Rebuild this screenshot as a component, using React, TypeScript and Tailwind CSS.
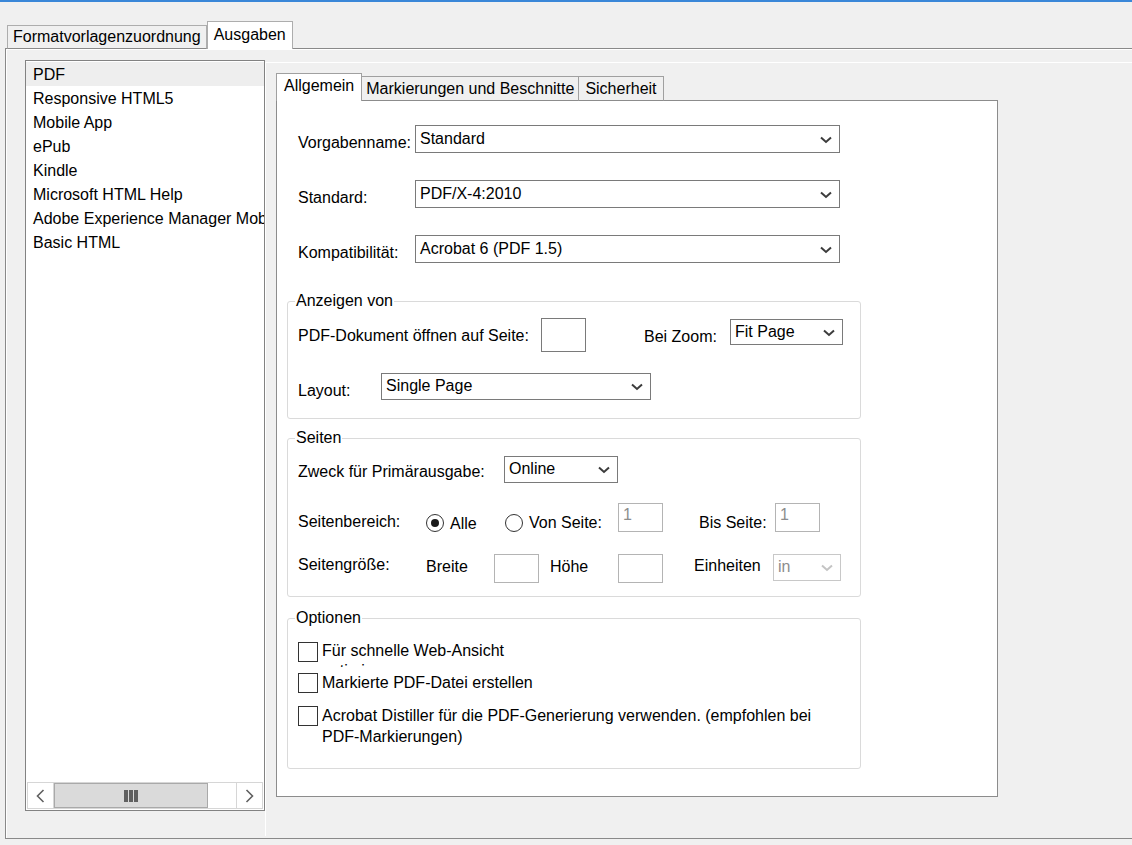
import React from "react";

type SelectProps = {
	width: number;
	height: number;
	value: string;
	disabled?: boolean;
	className?: string;
};

const Chevron = ({ disabled }: { disabled?: boolean }) => (
	<svg
		width="12"
		height="8"
		viewBox="0 0 12 8"
		className="shrink-0">
		<polyline
			points="1,1.5 6,6 11,1.5"
			fill="none"
			stroke={disabled ? "#c4c4c4" : "#3c3c3c"}
			strokeWidth="2"
		/>
	</svg>
);

const Select: React.FC<SelectProps> = ({ width, height, value, disabled, className }) => (
	<div
		className={`flex items-center justify-between bg-white border pl-[4px] pr-[7px] pb-[1px] ${
			disabled ? "border-[#c8c8c8] text-[#8d8d8d]" : "border-[#7a7a7a]"
		} ${className ?? ""}`}
		style={{ width, height }}>
		<span>{value}</span>
		<span className="pt-[2px]">
			<Chevron disabled={disabled} />
		</span>
	</div>
);

const TextBox = ({ value, dark, h = 29 }: { value?: string; dark?: boolean; h?: number }) => (
	<div
		className={`w-[45px] bg-white border pl-[4px] pt-[2px] text-[#8d8d8d] ${
			dark ? "border-[#7a7a7a]" : "border-[#b4b4b4]"
		}`}
		style={{ height: h }}>
		{value}
	</div>
);

const Radio = ({ checked }: { checked?: boolean }) => (
	<div className="w-[18px] h-[18px] rounded-full border border-[#333] bg-white flex items-center justify-center">
		{checked && <div className="w-[8px] h-[8px] rounded-full bg-[#1a1a1a]" />}
	</div>
);

const Checkbox = () => <div className="w-[20px] h-[20px] shrink-0 border border-[#333] bg-white" />;

const Group: React.FC<{ title: string; className?: string; children: React.ReactNode }> = ({
	title,
	className,
	children,
}) => (
	<fieldset className={`ml-[10px] w-[574px] border border-[#dadada] rounded-[3px] px-[7px] ${className ?? ""}`}>
		<legend className="px-[1px] leading-[18px]">{title}</legend>
		<div className="pl-[3px]">{children}</div>
	</fieldset>
);

const outputs = [
	"PDF",
	"Responsive HTML5",
	"Mobile App",
	"ePub",
	"Kindle",
	"Microsoft HTML Help",
	"Adobe Experience Manager Mobile",
	"Basic HTML",
];

export default function App() {
	return (
		<div className="w-[1132px] h-[845px] overflow-hidden bg-[#f0f0f0] text-[16px] leading-[18px] text-black font-['Liberation_Sans',Arial,sans-serif]">
			<div className="h-[2px] bg-[#3a87d8]" />

			{/* outer tabs */}
			<div className="relative z-10 h-[47px] -mb-px flex items-end pl-[7px]">
				<div className="h-[24px] px-[5px] flex items-center border border-[#adadad] border-b-[#898989] bg-[#f0f0f0]">
					Formatvorlagenzuordnung
				</div>
				<div className="h-[28px] px-[6px] pb-px flex items-center border border-b-0 border-[#adadad] bg-white">
					Ausgaben
				</div>
			</div>

			<div className="ml-[5px] h-[791px] border border-r-0 border-[#898989] flex shadow-[inset_1px_1px_0_#ffffff]">
				{/* output list */}
				<div className="w-[259px] shrink-0">
					<div className="ml-[19px] mt-[11px] w-[240px] h-[751px] border border-[#828282] bg-white flex flex-col overflow-hidden">
						<div className="flex-1 overflow-hidden pt-px">
							{outputs.map((name, i) => (
								<div
									key={name}
									className={`h-[24px] pl-[7px] pt-[2px] flex items-center whitespace-nowrap ${
										i === 0 ? "bg-[#eeeeee]" : ""
									}`}>
									{name}
								</div>
							))}
						</div>
						<div className="mx-px mb-px h-[27px] flex border border-[#d6d6d6]">
							<div className="w-[26px] flex items-center justify-center border-r border-[#d6d6d6]">
								<svg width="9" height="14" viewBox="0 0 9 14">
									<polyline points="7.5,1 1.5,7 7.5,13" fill="none" stroke="#606060" strokeWidth="1.6" />
								</svg>
							</div>
							<div className="w-[154px] bg-[#dadada] border border-[#a9a9a9] flex items-center justify-center gap-[1px]">
								<div className="w-[4px] h-[12px] bg-[#606060]" />
								<div className="w-[4px] h-[12px] bg-[#606060]" />
								<div className="w-[4px] h-[12px] bg-[#606060]" />
							</div>
							<div className="flex-1" />
							<div className="w-[26px] flex items-center justify-center border-l border-[#d6d6d6]">
								<svg width="9" height="14" viewBox="0 0 9 14">
									<polyline points="1.5,1 7.5,7 1.5,13" fill="none" stroke="#606060" strokeWidth="1.6" />
								</svg>
							</div>
						</div>
					</div>
				</div>

				{/* settings area */}
				<div className="flex-1 mt-[13px] h-[774px] border-l border-t border-white pl-[10px] pt-[10px]">
					<div className="relative z-10 h-[28px] -mb-px flex items-end">
						<div className="h-[28px] px-[7px] pb-[3px] flex items-center border border-b-0 border-[#a0a0a0] bg-white">
							Allgemein
						</div>
						<div className="h-[25px] px-[4px] flex items-center border border-l-0 border-[#a0a0a0] border-b-[#8c8c8c] bg-[#f0f0f0]">
							Markierungen und Beschnitte
						</div>
						<div className="h-[25px] px-[6px] flex items-center border border-l-0 border-[#a0a0a0] border-b-[#8c8c8c] bg-[#f0f0f0]">
							Sicherheit
						</div>
					</div>

					<div className="w-[722px] h-[697px] border border-[#8c8c8c] bg-white pt-[24px]">
						{[
							["Vorgabenname:", "Standard"],
							["Standard:", "PDF/X-4:2010"],
							["Kompatibilität:", "Acrobat 6 (PDF 1.5)"],
						].map(([label, value], i) => (
							<div key={label} className={`ml-[21px] flex items-start ${i > 0 ? "mt-[27px]" : ""}`}>
								<div className="w-[117px] pt-[9px]">{label}</div>
								<Select width={425} height={28} value={value} />
							</div>
						))}

						<Group title="Anzeigen von" className="mt-[29px] pb-[18px]">
							<div className="mt-[8px] flex items-start">
								<div className="w-[243px] pt-[9px]">PDF-Dokument öffnen auf Seite:</div>
								<TextBox dark h={34} />
								<div className="ml-[58px] w-[86px] pt-[10px]">Bei Zoom:</div>
								<Select width={113} height={26} value="Fit Page" className="mt-[1px]" />
							</div>
							<div className="mt-[21px] flex items-start">
								<div className="w-[83px] pt-[9px]">Layout:</div>
								<Select width={270} height={27} value="Single Page" />
							</div>
						</Group>

						<Group title="Seiten" className="mt-[10px] pb-[13px]">
							<div className="mt-[9px] flex items-start">
								<div className="w-[206px] pt-[7px]">Zweck für Primärausgabe:</div>
								<Select width={114} height={27} value="Online" />
							</div>
							<div className="mt-[20px] flex items-start">
								<div className="w-[128px] pt-[10px]">Seitenbereich:</div>
								<div className="mt-[11px]">
									<Radio checked />
								</div>
								<div className="ml-[6px] w-[55px] pt-[12px]">Alle</div>
								<div className="mt-[11px]">
									<Radio />
								</div>
								<div className="ml-[6px] w-[89px] pt-[11px]">Von Seite:</div>
								<TextBox value="1" />
								<div className="ml-[36px] w-[76px] pt-[11px]">Bis Seite:</div>
								<TextBox value="1" />
							</div>
							<div className="mt-[21px] flex items-start">
								<div className="w-[128px] pt-[2px]">Seitengröße:</div>
								<div className="w-[68px] pt-[4px]">Breite</div>
								<TextBox />
								<div className="ml-[11px] w-[68px] pt-[4px]">Höhe</div>
								<TextBox />
								<div className="ml-[31px] w-[79px] pt-[3px]">Einheiten</div>
								<Select width={68} height={27} value="in" disabled />
							</div>
						</Group>

						<Group title="Optionen" className="mt-[12px] pb-[21px]">
							<div className="mt-[15px] flex items-start">
								<Checkbox />
								<div className="ml-[4px] w-[200px] h-[26px] overflow-hidden leading-[20px] -mt-px">
									Für schnelle Web-Ansicht optimieren
								</div>
							</div>
							<div className="mt-[6px] flex items-start">
								<Checkbox />
								<div className="ml-[4px] pt-px">Markierte PDF-Datei erstellen</div>
							</div>
							<div className="mt-[13px] flex items-start">
								<Checkbox />
								<div className="ml-[4px] w-[520px] leading-[21px] -mt-px">
									Acrobat Distiller für die PDF-Generierung verwenden. (empfohlen bei PDF-Markierungen)
								</div>
							</div>
						</Group>
					</div>
				</div>
			</div>
		</div>
	);
}
